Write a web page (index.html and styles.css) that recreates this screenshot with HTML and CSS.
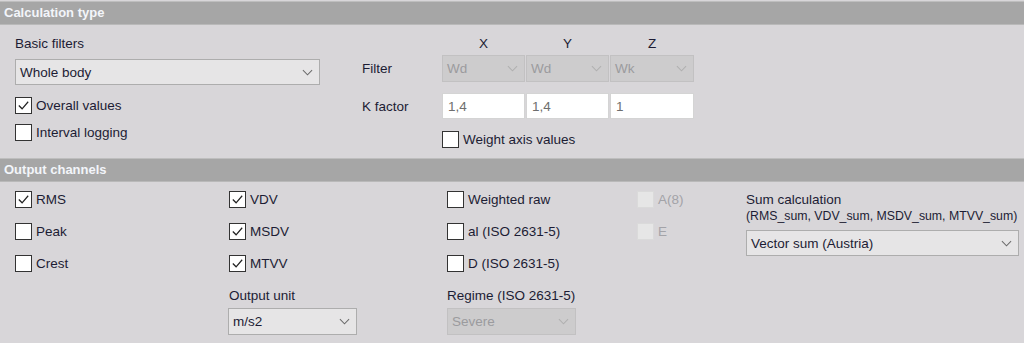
FILE: index.html
```html
<!DOCTYPE html>
<html>
<head>
<meta charset="utf-8">
<link rel="stylesheet" href="styles.css">
</head>
<body>
<div class="panel">
  <div class="hdr">Calculation type</div>
  <div class="sec1">
    <div class="left">
      <div class="lbl">Basic filters</div>
      <div class="dd wide"><span>Whole body</span><svg class="chev" viewBox="0 0 12 7"><polyline points="1,1 6,6 11,1"/></svg></div>
      <div class="cb first"><span class="box on"><svg viewBox="0 0 16 16"><polyline points="3,8 6.5,11.5 13,4"/></svg></span><span>Overall values</span></div>
      <div class="cb next"><span class="box"></span><span>Interval logging</span></div>
    </div>
    <div class="axes">
      <div></div><div class="ax">X</div><div class="ax">Y</div><div class="ax">Z</div>
      <div class="rl f">Filter</div>
      <div class="dd dis f"><span>Wd</span><svg class="chev" viewBox="0 0 12 7"><polyline points="1,1 6,6 11,1"/></svg></div>
      <div class="dd dis f"><span>Wd</span><svg class="chev" viewBox="0 0 12 7"><polyline points="1,1 6,6 11,1"/></svg></div>
      <div class="dd dis f"><span>Wk</span><svg class="chev" viewBox="0 0 12 7"><polyline points="1,1 6,6 11,1"/></svg></div>
      <div class="rl k">K factor</div>
      <div class="inp">1,4</div>
      <div class="inp">1,4</div>
      <div class="inp">1</div>
      <div></div>
      <div class="cb span3"><span class="box"></span><span>Weight axis values</span></div>
    </div>
  </div>
  <div class="hdr">Output channels</div>
  <div class="sec2">
    <div class="col c1">
      <div class="cb"><span class="box on"><svg viewBox="0 0 16 16"><polyline points="3,8 6.5,11.5 13,4"/></svg></span><span>RMS</span></div>
      <div class="cb"><span class="box"></span><span>Peak</span></div>
      <div class="cb"><span class="box"></span><span>Crest</span></div>
    </div>
    <div class="col c2">
      <div class="cb"><span class="box on"><svg viewBox="0 0 16 16"><polyline points="3,8 6.5,11.5 13,4"/></svg></span><span>VDV</span></div>
      <div class="cb"><span class="box on"><svg viewBox="0 0 16 16"><polyline points="3,8 6.5,11.5 13,4"/></svg></span><span>MSDV</span></div>
      <div class="cb"><span class="box on"><svg viewBox="0 0 16 16"><polyline points="3,8 6.5,11.5 13,4"/></svg></span><span>MTVV</span></div>
      <div class="lbl sub">Output unit</div>
      <div class="dd unit"><span>m/s2</span><svg class="chev" viewBox="0 0 12 7"><polyline points="1,1 6,6 11,1"/></svg></div>
    </div>
    <div class="col c3">
      <div class="cb"><span class="box"></span><span>Weighted raw</span></div>
      <div class="cb"><span class="box"></span><span>al (ISO 2631-5)</span></div>
      <div class="cb"><span class="box"></span><span>D (ISO 2631-5)</span></div>
      <div class="lbl sub">Regime (ISO 2631-5)</div>
      <div class="dd dis regime"><span>Severe</span><svg class="chev" viewBox="0 0 12 7"><polyline points="1,1 6,6 11,1"/></svg></div>
    </div>
    <div class="col c4">
      <div class="cb off"><span class="box"></span><span>A(8)</span></div>
      <div class="cb off"><span class="box"></span><span>E</span></div>
    </div>
    <div class="col c5">
      <div class="lbl">Sum calculation</div>
      <div class="small">(RMS_sum, VDV_sum, MSDV_sum, MTVV_sum)</div>
      <div class="dd sum"><span>Vector sum (Austria)</span><svg class="chev" viewBox="0 0 12 7"><polyline points="1,1 6,6 11,1"/></svg></div>
    </div>
  </div>
</div>
</body>
</html>
```

FILE: styles.css
```css
html, body {
  margin: 0;
  padding: 0;
  background: #d8d6d9;
}
body {
  font-family: "Liberation Sans", Arial, sans-serif;
  font-size: 13.5px;
  color: #1c1c34;
  width: 1024px;
  height: 343px;
  overflow: hidden;
}
.panel {
  padding-top: 1px;
}
.hdr {
  height: 22px;
  line-height: 22px;
  background: #a6a6a6;
  border-top: 1px solid #bebebe;
  border-bottom: 1px solid #b9b9b9;
  color: #f3f5fa;
  font-weight: bold;
  font-size: 13px;
  padding-left: 4px;
}
.sec1 {
  display: flex;
  height: 133px;
}
.left {
  margin-left: 15px;
  width: 305px;
  padding-top: 11px;
  display: flex;
  flex-direction: column;
}
.lbl {
  height: 16px;
  line-height: 16px;
}
.dd {
  box-sizing: border-box;
  height: 26px;
  background: #e6e5e6;
  border: 1px solid #adadad;
  display: flex;
  align-items: center;
  justify-content: space-between;
  padding: 0 6px 0 4px;
}
.dd .chev {
  width: 11px;
  height: 7px;
  fill: none;
  stroke: #6a6a6a;
  stroke-width: 1.1;
}
.left .dd {
  margin-top: 7px;
}
.cb {
  display: flex;
  align-items: center;
  gap: 4px;
  height: 20px;
}
.left .cb.first {
  margin-top: 10px;
}
.left .cb.next {
  margin-top: 7px;
}
.box {
  box-sizing: border-box;
  width: 17px;
  height: 17px;
  border: 1px solid #333;
  background: #fff;
  display: flex;
}
.box svg {
  width: 15px;
  height: 15px;
  fill: none;
  stroke: #222;
  stroke-width: 1.3;
}
.cb.off {
  color: #a3a3a8;
}
.cb.off .box {
  border-color: #dadada;
  background: #e6e6e6;
}
.axes {
  margin-left: 42px;
  padding-top: 11px;
  display: grid;
  grid-template-columns: 79px 83px 83px 84px;
  column-gap: 1px;
  grid-template-rows: 16px 30px 37px 30px;
  align-content: start;
}
.ax {
  text-align: center;
  line-height: 16px;
}
.axes .dd.f {
  align-self: end;
  height: 27px;
}
.rl {
  display: flex;
  align-items: center;
  align-self: end;
}
.rl.f { height: 27px; }
.rl.k { height: 26px; }
.dd.dis {
  background: #cdcccd;
  border-color: #c2c1c2;
  color: #9b9b9e;
}
.dd.dis .chev {
  stroke: #b0b0b0;
}
.inp {
  box-sizing: border-box;
  height: 26px;
  align-self: end;
  background: #fff;
  border: 1px solid #d4d4d4;
  color: #6e6e6e;
  padding-left: 5px;
  display: flex;
  align-items: center;
}
.span3 {
  grid-column: 2 / span 3;
  align-self: end;
}
.sec2 {
  display: flex;
  padding-top: 7px;
}
.col {
  display: flex;
  flex-direction: column;
  gap: 12px;
}
.c1 { margin-left: 15px; width: 214px; }
.c2 { width: 218px; }
.c3 { width: 190px; }
.c4 { width: 109px; }
.c5 { width: 273px; gap: 0; }
.col .lbl.sub {
  margin-top: 3px;
  margin-bottom: -8px;
}
.dd.unit {
  width: 129px;
  height: 27px;
  margin-left: -1px;
}
.dd.regime {
  width: 129px;
  height: 27px;
}
.c5 .lbl {
  margin-top: 3px;
}
.small {
  font-size: 12.3px;
  height: 16px;
  line-height: 16px;
  white-space: nowrap;
}
.dd.sum {
  margin-top: 6px;
  width: 273px;
}
```
